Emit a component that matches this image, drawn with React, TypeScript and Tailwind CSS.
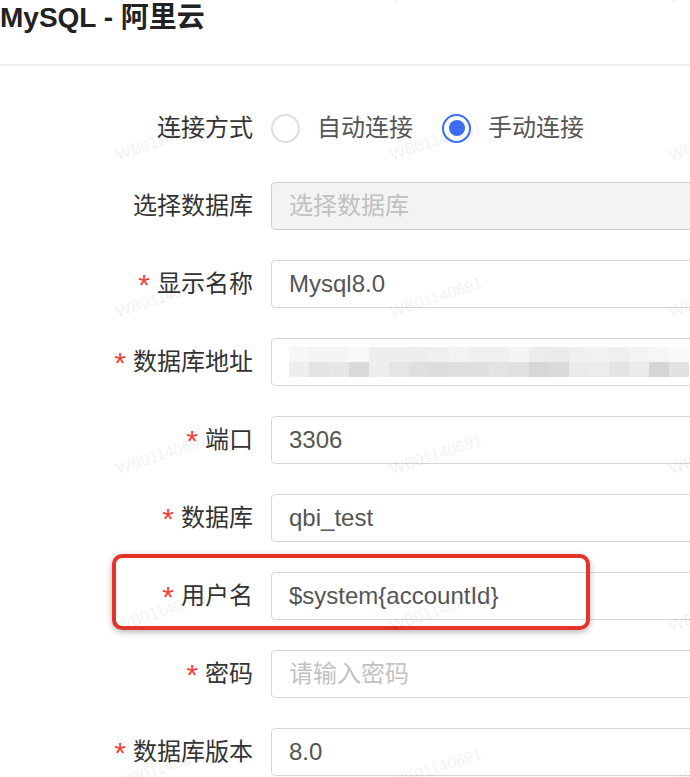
const font = { fontFamily: '"Liberation Sans", "Noto Sans CJK SC", sans-serif' };

const blurTop = ['#f7f7f7', '#f4f4f4', '#f5f5f5', '#f8f8f8', '#eeeeee', '#eeeeee', '#ededed', '#efefef', '#f3f3f3', '#f0f0f0', '#f0f0f0', '#f4f4f4', '#ececec', '#ebebeb', '#f0f0f0', '#f1f1f1', '#efefef', '#f3f3f3', '#f6f6f6', '#fafafa'];
const blurBottom = ['#eeeeee', '#e3e3e3', '#e7e7e7', '#d9d9d9', '#eeeeee', '#e5e5e5', '#dfdfdf', '#dcdcdc', '#dfdfdf', '#dfdfdf', '#e3e3e3', '#e0e0e0', '#d7d7d7', '#dadada', '#eaeaea', '#ececec', '#e4e4e4', '#eaeaea', '#d5d5d5', '#e2e2e2'];

const marks: { x: number; y: number }[] = [];
[6, 163, 320, 477, 634, 791].forEach((y) => {
  [119, 393, 672].forEach((x) => marks.push({ x, y }));
});

const Label = ({ text, required }: { text: string; required?: boolean }) => (
  <div className="w-[253px] shrink-0 flex items-center justify-end text-[24px] text-[#333]">
    {required && <span className="mr-[7px] text-[30px] leading-none text-[#f0443a] translate-y-[1px]">*</span>}
    <span>{text}</span>
  </div>
);

const Input = ({
  value,
  placeholder,
  disabled,
  children,
}: {
  value?: string;
  placeholder?: string;
  disabled?: boolean;
  children?: React.ReactNode;
}) => (
  <div
    className={
      disabled
        ? 'flex-1 h-[48px] rounded-[4px] border border-[#cfcfcf] bg-[#f3f3f3] flex items-center pl-[17px] text-[24px] text-[#c0c0c0]'
        : 'flex-1 h-[48px] rounded-[4px] border border-[#d6d6d6] bg-white flex items-center pl-[17px] text-[24px] ' +
          (value ? 'text-[#555]' : 'text-[#c2c2c2]')
    }
  >
    {children ?? value ?? placeholder}
  </div>
);

const Row = ({ children }: { children: React.ReactNode }) => (
  <div className="relative flex items-center gap-[18px] h-[48px] w-[760px]">{children}</div>
);

const Radio = ({ checked, text }: { checked?: boolean; text: string }) => (
  <div className="flex items-center gap-[17px]">
    <div
      className={
        checked
          ? 'w-[29px] h-[29px] rounded-full border-2 border-[#3c6ef5] flex items-center justify-center'
          : 'w-[29px] h-[29px] rounded-full border-2 border-[#dedede]'
      }
    >
      {checked && <div className="w-[16px] h-[16px] rounded-full bg-[#3c6ef5]" />}
    </div>
    <span className="text-[24px] text-[#555]">{text}</span>
  </div>
);

export default function App() {
  return (
    <div className="relative w-[690px] h-[777px] overflow-hidden bg-white" style={font}>
      <div className="h-[64px] text-[28px] leading-[36px] font-bold text-[#222]">MySQL - 阿里云</div>
      <div className="h-[2px] bg-[#f0f0f0]" />

      <div className="flex flex-col gap-[30px] pt-[38px]">
        <Row>
          <Label text="连接方式" />
          <div className="flex items-center gap-[29px]">
            <Radio text="自动连接" />
            <Radio checked text="手动连接" />
          </div>
        </Row>
        <Row>
          <Label text="选择数据库" />
          <Input disabled placeholder="选择数据库" />
        </Row>
        <Row>
          <Label text="显示名称" required />
          <Input value="Mysql8.0" />
        </Row>
        <Row>
          <Label text="数据库地址" required />
          <Input>
            <div className="flex flex-col">
              <div className="flex">
                {blurTop.map((c, i) => (
                  <div key={i} className="w-[20px] h-[15px]" style={{ backgroundColor: c }} />
                ))}
              </div>
              <div className="flex">
                {blurBottom.map((c, i) => (
                  <div key={i} className="w-[20px] h-[15px]" style={{ backgroundColor: c }} />
                ))}
              </div>
            </div>
          </Input>
        </Row>
        <Row>
          <Label text="端口" required />
          <Input value="3306" />
        </Row>
        <Row>
          <Label text="数据库" required />
          <Input value="qbi_test" />
        </Row>
        <Row>
          <Label text="用户名" required />
          <Input value="$system{accountId}" />
          <div className="absolute left-[112px] top-[-18px] w-[478px] h-[76px] rounded-[10px] border-[4px] border-[#e2342a] shadow-[0_2px_6px_rgba(0,0,0,0.3)] pointer-events-none" />
        </Row>
        <Row>
          <Label text="密码" required />
          <Input placeholder="请输入密码" />
        </Row>
        <Row>
          <Label text="数据库版本" required />
          <Input value="8.0" />
        </Row>
      </div>

      {/* watermark */}
      <div className="absolute inset-0 pointer-events-none">
        {marks.map((m, i) => (
          <span
            key={i}
            className="absolute text-[16px] leading-none text-black/[0.07] whitespace-nowrap origin-bottom-left -rotate-[18deg]"
            style={{ left: m.x, top: m.y - 16 }}
          >
            WB01140691
          </span>
        ))}
      </div>
    </div>
  );
}
